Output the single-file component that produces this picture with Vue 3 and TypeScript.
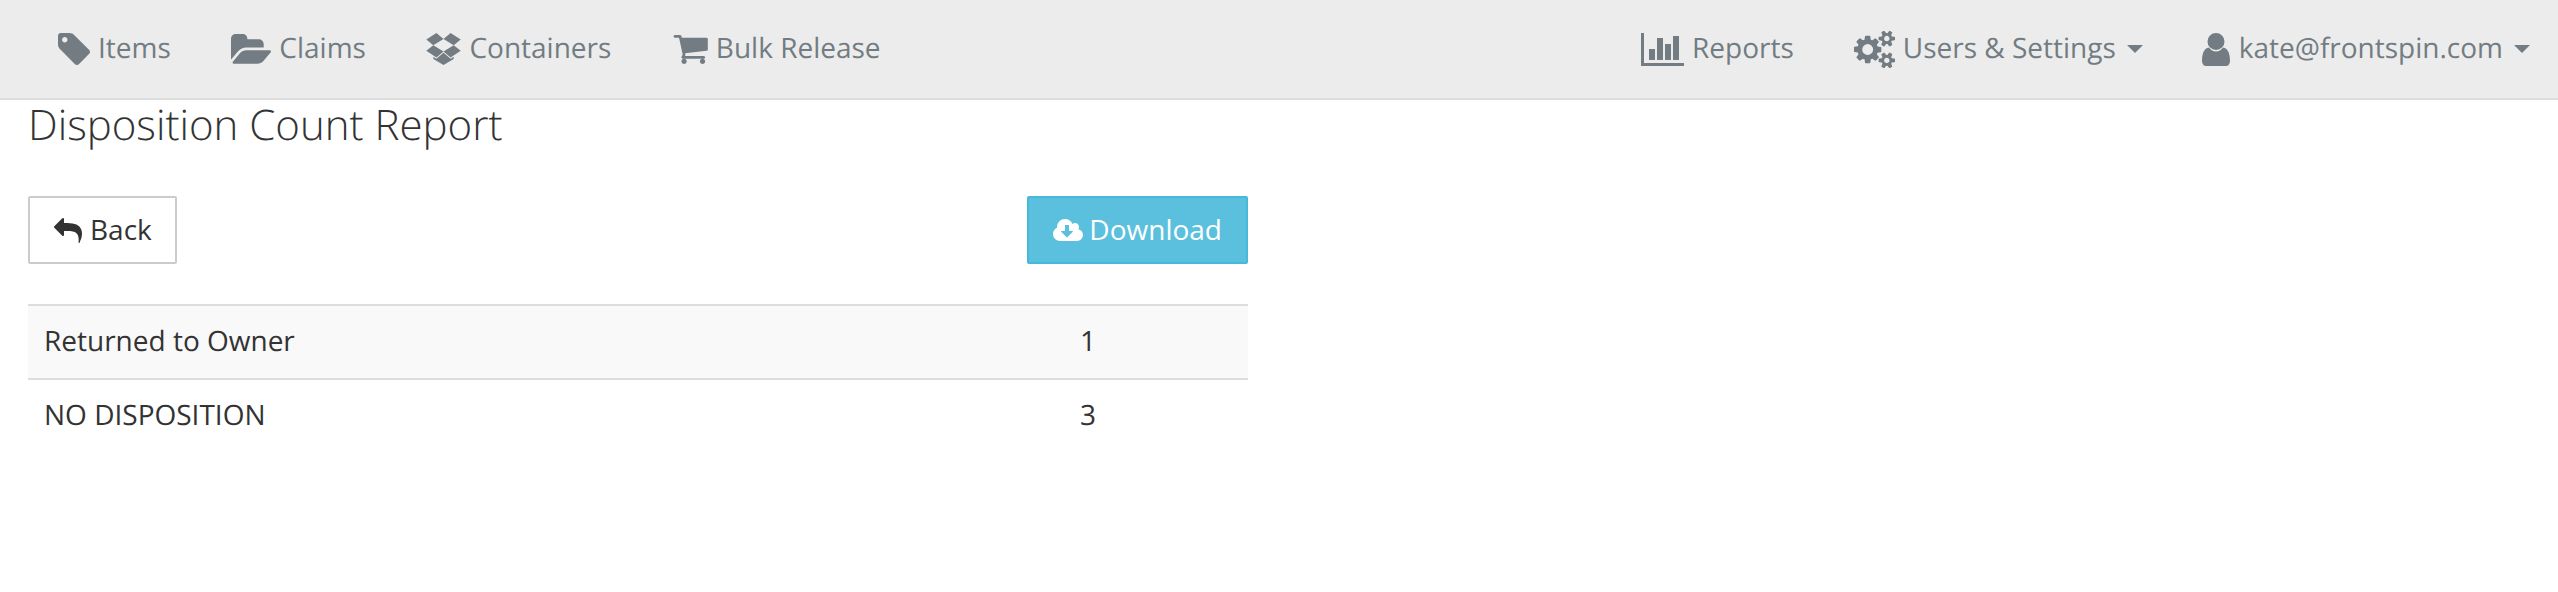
<script setup lang="ts">
interface NavItem {
  label: string;
  icon: string;
  box: string;
  w: number;
  h: number;
  caret?: boolean;
}

const CLOUD = 'M1280 928q0-14-9-23t-23-9h-224v-352q0-13-9.500-22.500t-22.500-9.500h-192q-13 0-22.500 9.500t-9.500 22.500v352h-224q-13 0-22.500 9.500t-9.500 22.500q0 14 9 23l352 352q9 9 23 9t23-9l351-352q10-12 10-24zm640 224q0 159-112.500 271.500t-271.500 112.500h-1088q-185 0-316.500-131.500t-131.500-316.500q0-130 70-240t188-165q-2-30-2-43 0-212 150-362t362-150q156 0 285.500 87t188.500 231q71-62 166-62 106 0 181 75t75 181q0 76-41 138 130 31 213.500 135.500t83.500 238.500z';
const REPLY = 'M1792 1120q0 166-127 451-3 7-10.500 24t-13.500 30-13 22q-12 17-28 17-15 0-23.500-10t-8.500-25q0-9 2.500-26.500t2.500-23.500q5-68 5-123 0-101-17.500-181t-48.500-138.500-80-101-105.500-69.500-133-42.500-154-21.500-175.500-6h-224v256q0 26-19 45t-45 19-45-19l-512-512q-19-19-19-45t19-45l512-512q19-19 45-19t45 19 19 45v256h224q713 0 875 403 53 134 53 333z';

const leftItems: NavItem[] = [
  {
    label: 'Items',
    icon: 'M576 448q0-53-37.500-90.500t-90.500-37.500-90.500 37.500-37.500 90.500 37.500 90.500 90.500 37.500 90.500-37.500 37.500-90.500zm1067 576q0 53-37 90l-491 492q-39 37-91 37-53 0-90-37l-715-716q-38-37-64.500-101t-26.500-117v-416q0-52 38-90t90-38h416q53 0 117 26.500t102 64.500l715 714q37 39 37 91z',
    box: '128 128 1515 1515',
    w: 32,
    h: 32,
  },
  {
    label: 'Claims',
    icon: 'M1815 952q0 31-31 66l-336 396q-43 51-120.500 86.500t-143.500 35.500h-1088q-34 0-60.500-13t-26.500-43q0-31 31-66l336-396q43-51 120.500-86.500t143.500-35.500h1088q34 0 60.500 13t26.500 43zm-343-344v160h-832q-94 0-197 47.500t-164 119.500l-337 396-5 6q0-4-.500-12.500t-.500-12.500v-960q0-92 66-158t158-66h320q92 0 158 66t66 158v32h544q92 0 158 66t66 158z',
    box: '-64 140 1879 1396',
    w: 40,
    h: 30,
  },
  {
    label: 'Containers',
    icon: 'M402 707l494 305-342 285-490-319zm986 555v108l-490 293v1l-1-1-1 1v-1l-489-293v-108l147 96 342-284v-2l1 1 1-1v2l343 284zm-834-1144l342 285-494 304-338-270zm836 589l338 271-489 319-343-285zm-151-589l489 319-338 270-494-304z',
    box: '64 118 1664 1546',
    w: 35,
    h: 32,
  },
  {
    label: 'Bulk Release',
    icon: 'M704 1536q0 52-38 90t-90 38-90-38-38-90 38-90 90-38 90 38 38 90zm896 0q0 52-38 90t-90 38-90-38-38-90 38-90 90-38 90 38 38 90zm128-1088v512q0 24-16.500 42.500t-40.500 21.500l-1044 122q13 60 13 70 0 16-24 64h920q26 0 45 19t19 45-19 45-45 19h-1024q-26 0-45-19t-19-45q0-11 8-31.500t16-36 21.500-40 15.500-29.500l-177-823h-204q-26 0-45-19t-19-45 19-45 45-19h256q16 0 28.500 6.500t19.500 15.500 13 24.500 8 26 5.500 29.500 4.500 26h1201q26 0 45 19t19 45z',
    box: '0 256 1728 1408',
    w: 36,
    h: 29,
  },
];

const rightItems: NavItem[] = [
  {
    label: 'Reports',
    icon: 'M0 0h3v30h40v3H0zM8 16h6v11H8zM16 5h6v22h-6zM24 11h6v16h-6zM32 3h6v24h-6z',
    box: '0 0 43 33',
    w: 43,
    h: 33,
  },
  {
    label: 'Users & Settings',
    icon: 'M960 896q0-106-75-181t-181-75-181 75-75 181 75 181 181 75 181-75 75-181zm768 512q0-52-38-90t-90-38-90 38-38 90q0 53 37.500 90.500t90.500 37.500 90.500-37.500 37.500-90.500zm0-1024q0-52-38-90t-90-38-90 38-38 90q0 53 37.500 90.500t90.500 37.500 90.500-37.500 37.500-90.500zm-384 421v185q0 10-7 19.500t-16 10.500l-155 24q-11 35-32 76 34 48 90 115 7 11 7 20 0 12-7 19-23 30-82.500 89.500t-78.500 59.500q-11 0-21-7l-115-90q-37 19-77 31-11 108-23 155-7 24-30 24h-186q-11 0-20-7.500t-10-17.500l-23-153q-34-10-75-31l-118 89q-7 7-20 7-11 0-21-8-144-133-144-160 0-9 7-19 10-14 41-53t47-61q-23-44-35-82l-152-24q-10-1-17-9.500t-7-19.500v-185q0-10 7-19.500t16-10.500l155-24q11-35 32-76-34-48-90-115-7-11-7-20 0-12 7-20 22-30 82-89t79-59q11 0 21 7l115 90q34-18 77-32 11-108 23-154 7-24 30-24h186q11 0 20 7.500t10 17.500l23 153q34 10 75 31l118-89q8-7 20-7 11 0 21 8 144 133 144 160 0 8-7 19-12 16-42 54t-45 60q23 48 34 82l152 23q10 2 17 10.500t7 19.500zm640 533v140q0 16-149 31-12 27-30 52 51 113 51 138 0 4-4 7-122 71-124 71-8 0-46-47t-52-68q-20 2-30 2t-30-2q-14 21-52 68t-46 47q-2 0-124-71-4-3-4-7 0-25 51-138-18-25-30-52-149-15-149-31v-140q0-16 149-31 13-29 30-52-51-113-51-138 0-4 4-7 4-2 35-20t59-34 30-16q8 0 46 46.500t52 67.500q20-2 30-2t30 2q51-71 92-112l6-2q4 0 124 70 4 3 4 7 0 25-51 138 17 23 30 52 149 15 149 31zm0-1024v140q0 16-149 31-12 27-30 52 51 113 51 138 0 4-4 7-122 71-124 71-8 0-46-47t-52-68q-20 2-30 2t-30-2q-14 21-52 68t-46 47q-2 0-124-71-4-3-4-7 0-25 51-138-18-25-30-52-149-15-149-31v-140q0-16 149-31 13-29 30-52-51-113-51-138 0-4 4-7 4-2 35-20t59-34 30-16q8 0 46 46.500t52 67.500q20-2 30-2t30 2q51-71 92-112l6-2q4 0 124 70 4 3 4 7 0 25-51 138 17 23 30 52 149 15 149 31z',
    box: '64 64 1920 1664',
    w: 41,
    h: 37,
    caret: true,
  },
  {
    label: 'kate@frontspin.com',
    icon: 'M6.500 8.500a8.500 8.500 0 1 1 17 0a8.500 8.500 0 1 1-17 0zM1 28c0-7 2-13 7-13.500c2 2.500 4 4 7 4s5-1.500 7-4c5 .5 7 6.500 7 13.500c0 3-2 5-4 5H5c-2 0-4-2-4-5z',
    box: '0 0 30 33',
    w: 30,
    h: 33,
    caret: true,
  },
];

const rows = [
  { name: 'Returned to Owner', count: 1 },
  { name: 'NO DISPOSITION', count: 3 },
];
</script>

<template>
  <div class="page">
    <nav class="navbar">
      <ul class="nav nav--left">
        <li v-for="item in leftItems" :key="item.label" class="nav-item">
          <svg class="icon" :viewBox="item.box" :width="item.w" :height="item.h"><path :d="item.icon" /></svg>
          <span class="nav-label">{{ item.label }}</span>
        </li>
      </ul>
      <ul class="nav nav--right">
        <li v-for="item in rightItems" :key="item.label" class="nav-item">
          <svg class="icon" :viewBox="item.box" :width="item.w" :height="item.h"><path :d="item.icon" /></svg>
          <span class="nav-label">{{ item.label }}</span>
          <i v-if="item.caret" class="caret"></i>
        </li>
      </ul>
    </nav>

    <main class="content">
      <h1 class="title">Disposition Count Report</h1>
      <div class="actions">
        <button type="button" class="btn btn--back">
          <svg class="icon" viewBox="0 64 1792 1600" width="28" height="25"><path :d="REPLY" /></svg>
          <span class="btn-label">Back</span>
        </button>
        <button type="button" class="btn btn--info">
          <svg class="icon" viewBox="0 128 1920 1408" width="30" height="22"><path :d="CLOUD" /></svg>
          <span class="btn-label">Download</span>
        </button>
      </div>
      <table class="report">
        <tbody>
          <tr v-for="row in rows" :key="row.name">
            <td>{{ row.name }}</td>
            <td class="count">{{ row.count }}</td>
          </tr>
        </tbody>
      </table>
    </main>
  </div>
</template>

<style>
html,
body {
  background: #fff;
}
</style>

<style scoped>
.page {
  font-family: "Open Sans", sans-serif;
  font-size: 28px;
  line-height: 40px;
  color: #333;
  text-rendering: geometricPrecision;
}

.navbar {
  display: flex;
  justify-content: space-between;
  height: 98px;
  padding: 0 28px 0 58px;
  background: #ececec;
  border-bottom: 2px solid #ddd;
}

.nav {
  display: flex;
  align-items: center;
  margin: 0;
  padding: 0;
  list-style: none;
}

.nav--left {
  gap: 60.5px;
}

.nav--right {
  gap: 58px;
}

.nav--right .nav-item:first-child {
  margin-right: 2px;
}

.nav-item {
  display: flex;
  align-items: center;
  gap: 8px;
  color: #727c82;
}

.nav-label {
  margin-bottom: 3px;
}

.icon {
  display: block;
  flex: none;
  fill: currentColor;
}

.caret {
  width: 0;
  height: 0;
  margin-left: 3px;
  border-top: 8px solid currentColor;
  border-left: 8px solid transparent;
  border-right: 8px solid transparent;
}

.content {
  width: 1220px;
  padding: 0 0 0 28px;
}

.title {
  margin: 2px 0 0;
  font-size: 42px;
  font-weight: 300;
  line-height: 46px;
}

.actions {
  display: flex;
  justify-content: space-between;
  margin-top: 48px;
}

.btn {
  display: flex;
  align-items: center;
  gap: 8px;
  height: 68px;
  padding: 0 24px;
  font: inherit;
  color: #333;
  background: #fff;
  border: 2px solid #ccc;
  border-radius: 2px;
}

.btn-label {
  margin-bottom: 3px;
}

.btn--back {
  padding-right: 23px;
}

.btn--info {
  gap: 6px;
  color: #fff;
  background: #5bc0de;
  border-color: #46b8da;
}

.report {
  width: 100%;
  margin-top: 40px;
  border-collapse: collapse;
}

.report td {
  padding: 15px 16px 17px;
  border-top: 2px solid #ddd;
}

.report tr:first-child {
  background: #f9f9f9;
}

.count {
  width: 152px;
}
</style>
